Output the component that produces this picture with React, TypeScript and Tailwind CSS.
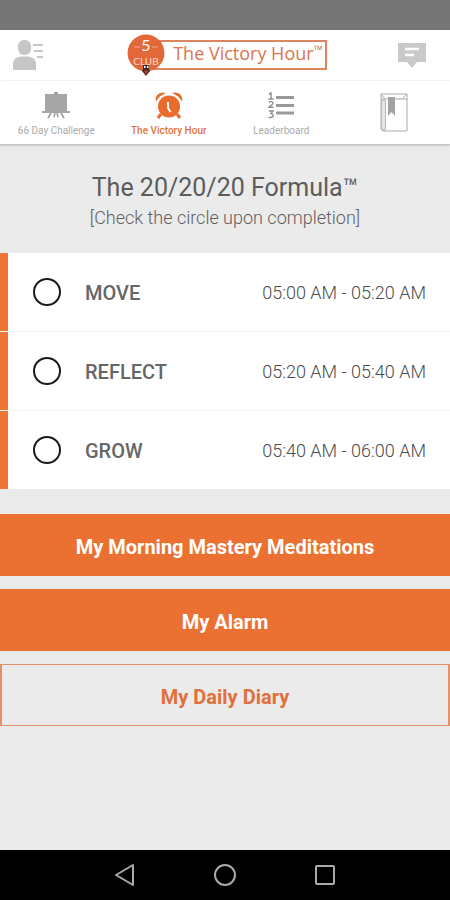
import { useState } from 'react'

const SESSIONS = [
  { name: 'MOVE', time: '05:00 AM - 05:20 AM' },
  { name: 'REFLECT', time: '05:20 AM - 05:40 AM' },
  { name: 'GROW', time: '05:40 AM - 06:00 AM' },
]

const TABS = [
  { label: '66 Day Challenge', Icon: EaselIcon },
  { label: 'The Victory Hour', Icon: AlarmIcon },
  { label: 'Leaderboard', Icon: RankIcon },
  { label: '', Icon: JournalIcon },
]

export default function App() {
  const [tab, setTab] = useState(1)

  return (
    <div className="flex min-h-screen flex-col bg-[#ebebeb] font-['Roboto',sans-serif]">
      <div className="h-[30px] bg-[#757575]" />

      <header className="grid h-[51px] grid-cols-[1fr_auto_1fr] items-center border-b border-[#f5f5f5] bg-white pr-6 pl-3">
        <button type="button" aria-label="Profile" className="justify-self-start">
          <ProfileIcon />
        </button>
        <Logo />
        <button type="button" aria-label="Messages" className="justify-self-end">
          <MessageIcon />
        </button>
      </header>

      <nav className="grid h-[64px] grid-cols-4 border-b border-[#c4c4c4] bg-white shadow-[0_1px_2px_#c8c8c8]">
        {TABS.map(({ label, Icon }, i) => (
          <button
            key={i}
            type="button"
            aria-label={label || 'Journal'}
            onClick={() => setTab(i)}
            className={[
              'flex flex-col items-center pt-[11px] text-[10px] leading-3',
              i === tab ? 'font-medium text-[#e2743c]' : 'text-[#ababab]',
            ].join(' ')}
          >
            <Icon />
            {label && <span className="mt-1.5 whitespace-nowrap">{label}</span>}
          </button>
        ))}
      </nav>

      <main className="flex-1 pb-6">
        <div className="flex h-[108px] flex-col items-center pt-[27px]">
          <h1 className="text-[25px] leading-8 text-[#5c5c5c]">The 20/20/20 Formula™</h1>
          <p className="text-lg leading-7 font-light text-[#606060]">[Check the circle upon completion]</p>
        </div>

        <ul className="divide-y divide-[#f2f2f2] bg-white">
          {SESSIONS.map((s) => (
            <SessionRow key={s.name} name={s.name} time={s.time} />
          ))}
        </ul>

        <div className="mt-[25px] flex flex-col gap-[13px] text-xl font-bold">
          <button type="button" className="h-[62px] bg-[#eb7132] pt-1 text-white">
            My Morning Mastery Meditations
          </button>
          <button type="button" className="h-[62px] bg-[#eb7132] pt-1 text-white">
            My Alarm
          </button>
          <button
            type="button"
            className="h-[62px] border border-x-2 border-[#e49068] pt-1 text-[#e2703a]"
          >
            My Daily Diary
          </button>
        </div>
      </main>

      <SystemBar />
    </div>
  )
}

function SessionRow({ name, time }: { name: string; time: string }) {
  return (
    <li className="flex">
      <span className="w-2 bg-[#ee7434]" />
      <label className="flex h-[78px] flex-1 items-center pr-6 pl-[25px]">
        <input
          type="checkbox"
          className="size-7 appearance-none rounded-full border-2 border-[#1a1a1a] checked:bg-[#eb7132]"
        />
        <span className="ml-6 flex-1 pt-0.5 text-xl font-medium text-[#666]">{name}</span>
        <span className="pt-0.5 text-lg font-light text-[#4c4c4c]">{time}</span>
      </label>
    </li>
  )
}

function Logo() {
  return (
    <div className="ml-4 flex items-center">
      <svg className="relative h-[42px] w-[38px]" viewBox="0 0 38 42">
        <circle cx="19" cy="19" r="18.5" fill="#e2683a" />
        <path d="M7 13h6M25 13h6" stroke="#f0a889" strokeWidth="1" />
        <text x="19" y="17" textAnchor="middle" fontSize="16" fill="#fff" fontFamily="Lato, sans-serif">
          5
        </text>
        <text x="19" y="31" textAnchor="middle" fontSize="10" fill="#f9d8c8" fontFamily="Lato, sans-serif">
          CLUB
        </text>
        <path d="M16 31h6v4l1 2-4 5-4-5 1-2z" fill="#3a2b2b" />
        <path d="M17 32h1.5v2H17zM20 32h1.5v2H20z" fill="#fff" />
        <path d="M17 37l2-1 2 1-2 4z" fill="#c9342a" />
      </svg>
      <div className="-ml-4 flex h-[30px] items-center border-2 border-[#dc8560] pr-0.5 pb-1 pl-[22px] font-['Open_Sans',sans-serif] text-lg text-[#d9754c]">
        The Victory Hour
        <span className="self-start pt-0.5 text-xs leading-3">™</span>
      </div>
    </div>
  )
}

function ProfileIcon() {
  return (
    <svg className="h-8 w-8" viewBox="0 0 32 32" fill="#c6c6c6">
      <rect x="6" y="1" width="13" height="15" rx="6" />
      <path d="M1 31v-6c0-5 4-7 8-7.500h7c4 .5 8 2.500 8 7.500v6z" />
      <path d="M21 5h10v2H21zM22 11h9v2h-9zM25 17h6v2h-6z" />
    </svg>
  )
}

function MessageIcon() {
  return (
    <svg className="h-[27px] w-7" viewBox="0 0 28 27">
      <path d="M0 1h28v19h-9l-5 6-5-6H0z" fill="#c9c9c9" />
      <path d="M7 7h14M7 13h9" stroke="#fff" strokeWidth="2.500" />
    </svg>
  )
}

function EaselIcon() {
  return (
    <svg className="h-[27px] w-7" viewBox="0 0 28 27">
      <path d="M12 0h4v2h9v17h3v2H0v-2h3V2h9z" fill="#a6a6a6" />
      <path d="M9 21l-3 5M19 21l3 5M13 21l-1 4M15 21l1 4" stroke="#999" strokeWidth="1.500" fill="none" />
    </svg>
  )
}

function AlarmIcon() {
  return (
    <svg className="h-[27px] w-7" viewBox="0 0 28 27">
      <path d="M1 9.500C-1 4 5-1.500 11 1 7 2.500 3 5.500 1 9.500zM27 9.500C29 4 23-1.500 17 1 21 2.500 25 5.500 27 9.500z" fill="#ea6c2c" />
      <circle cx="14" cy="14.500" r="11" fill="#ea6c2c" />
      <path d="M6 22l-3 4M22 22l3 4" stroke="#ea6c2c" strokeWidth="3" />
      <path d="M13 10v6l2.500 4" stroke="#fff" strokeWidth="2" fill="none" />
    </svg>
  )
}

function RankIcon() {
  return (
    <svg className="h-[27px] w-7" viewBox="0 0 28 27">
      <path
        d="M2 2l2-1v6M1.500 7h5M2 10.500c1-1.500 4-1 4 .7 0 1.500-3 2.500-4 4h4.500M2 19h4l-2 2.500c3 0 3 4-.5 4H1.500"
        stroke="#8f8f8f"
        strokeWidth="1.400"
        fill="none"
      />
      <path d="M9 5.500h18M9 13.500h18M9 21h18" stroke="#999" strokeWidth="2.800" />
    </svg>
  )
}

function JournalIcon() {
  return (
    <svg className="h-10 w-7" viewBox="0 0 28 40" fill="none">
      <path d="M1 2h26v37H3l-2-2z" fill="#fff" stroke="#aaa" />
      <path d="M1.500 8h4v30H3l-1.500-1.500z" fill="#e4e4e4" stroke="#bbb" />
      <path d="M1 7h26M1 2l4 5M22 7l5-5" stroke="#aaa" />
      <path d="M8 5h7v19l-3.500-4L8 24z" fill="#a3a3a3" />
    </svg>
  )
}

function SystemBar() {
  return (
    <div className="flex h-[50px] items-center justify-center gap-[76px] bg-black">
      <button type="button" aria-label="Back">
        <svg className="size-6" viewBox="0 0 24 24" fill="none" stroke="#aaa" strokeWidth="2" strokeLinejoin="round">
          <path d="M20 2v20L3 12z" />
        </svg>
      </button>
      <button type="button" aria-label="Home">
        <svg className="size-6" viewBox="0 0 24 24" fill="none" stroke="#aaa" strokeWidth="2">
          <circle cx="12" cy="12" r="10" />
        </svg>
      </button>
      <button type="button" aria-label="Recent apps">
        <svg className="size-6" viewBox="0 0 24 24" fill="none" stroke="#aaa" strokeWidth="2">
          <rect x="3" y="3" width="18" height="18" rx="1" />
        </svg>
      </button>
    </div>
  )
}
